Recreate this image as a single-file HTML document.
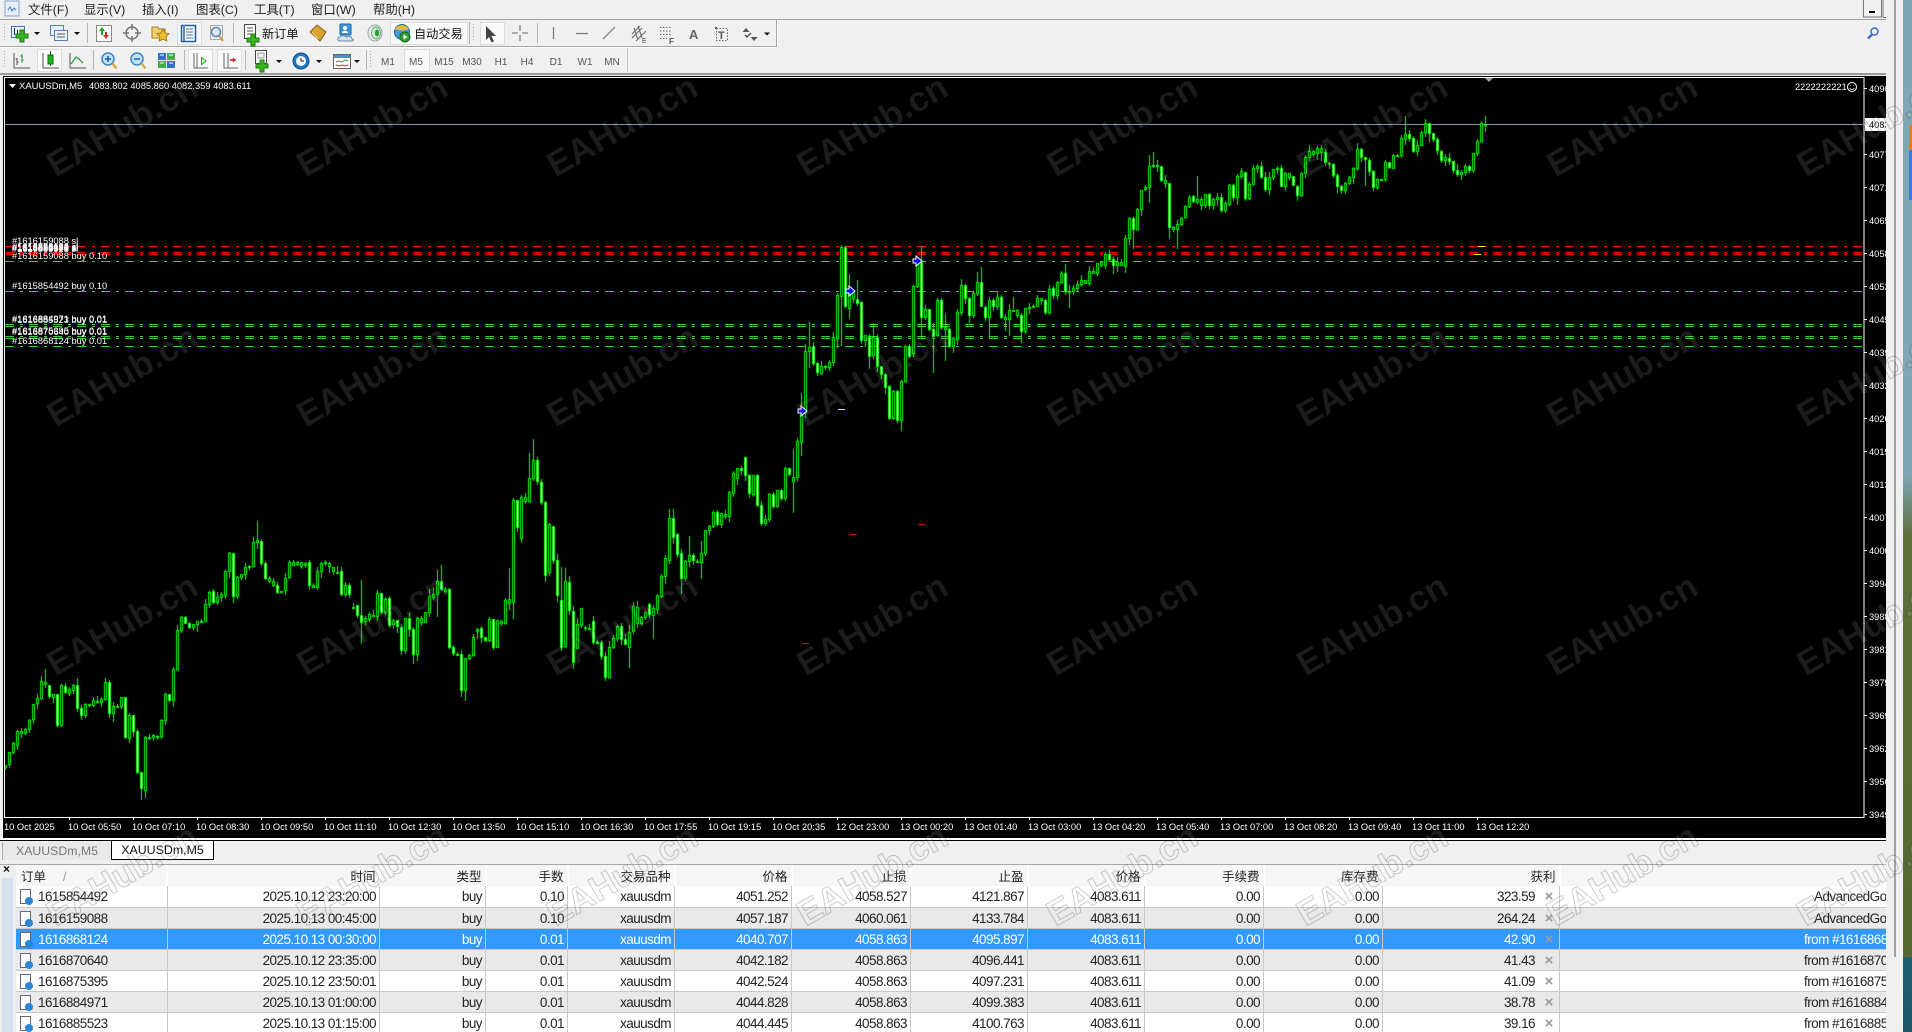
<!DOCTYPE html>
<html><head><meta charset="utf-8"><title>MT4</title>
<style>
html,body{margin:0;padding:0;width:1912px;height:1032px;overflow:hidden;background:#f0f0f0}
body{position:relative;font-family:"Liberation Sans","Noto Sans CJK SC",sans-serif;color:#222}
.abs{position:absolute}
svg{position:absolute;left:0;top:0;display:block}
#chart{position:absolute;left:3px;top:76px;width:1883px;height:762px;background:#000}
canvas{position:absolute;left:0;top:0}
#lines line{shape-rendering:crispEdges;stroke-dasharray:9 6 3 6}
.chtx{font:9.3px "Liberation Sans",sans-serif;fill:#fff}
table{position:absolute;border-collapse:collapse;table-layout:fixed;font:13.5px "Liberation Sans","Noto Sans CJK SC",sans-serif;letter-spacing:-.55px}
td{box-sizing:border-box;white-space:nowrap;overflow:hidden;text-align:right;padding:0 3px 0 0}
#tb td{height:21px;padding-top:1px;border-right:1px solid #c8c8c8;border-bottom:1px solid #c8c8c8;color:#222}
#tb td:first-child{text-align:left;padding-left:4px}
#tb td:last-child{text-align:left;border-right:0}
#tb td.p{padding-right:0}
#tb tr.g td{background:#e9e9e9}
#tb tr.w td{background:#fff}
#tb tr.s td{background:#3399ff;color:#fff}
.i{display:inline-block;position:relative;width:11px;height:15px;background:#fff;border:1px solid #667;margin-right:7px;vertical-align:-3px;box-sizing:border-box}
.i:after{content:"";position:absolute;right:-3px;bottom:-2px;width:8px;height:8px;border-radius:50%;background:#2a86d8}
.x{display:inline-block;width:24px;padding-left:4px;box-sizing:border-box;text-align:center;font-weight:bold;font-size:15px;color:#999;line-height:12px;letter-spacing:0}
#th{font-size:12.5px;letter-spacing:0}
#th td{height:21px;background:#f6f6f6;border-right:2px solid #fff;padding-right:3px;color:#222}
#th td:first-child{text-align:left;padding-left:5px}
</style></head>
<body>

<!-- toolbars -->
<svg width="1912" height="76" viewBox="0 0 1912 76" style="font-family:'Liberation Sans','Noto Sans CJK SC',sans-serif">
<rect x="5" y="1" width="14" height="15" fill="#e8eef8" stroke="#8aa4cc"/><path d="M8 10l2-3 2 4 2-3 2 2" stroke="#4a78c0" fill="none"/>
<g font-size="12.4" fill="#222">
<text x="28" y="14">文件(F)</text><text x="84" y="14">显示(V)</text><text x="142" y="14">插入(I)</text><text x="196" y="14">图表(C)</text><text x="254" y="14">工具(T)</text><text x="311" y="14">窗口(W)</text><text x="373" y="14">帮助(H)</text>
</g>
<rect x="1863.5" y="-1" width="18" height="18" fill="#f0f0f0" stroke="#777"/><rect x="1869" y="11" width="6" height="2" fill="#000"/><path d="M1883 0v17M1883 17.500h3" stroke="#777"/>
<rect x="0" y="19" width="1886" height="1" fill="#a3a3a3"/>
<rect x="0" y="46" width="776" height="1" fill="#a3a3a3"/><rect x="776" y="20" width="1" height="27" fill="#a3a3a3"/><rect x="0" y="47" width="777" height="1" fill="#fff"/><rect x="777" y="20" width="1" height="28" fill="#fff"/>
<rect x="627" y="48" width="1" height="24" fill="#c0c0c0"/>
<rect x="0" y="73" width="1886" height="2" fill="#9a9a9a"/>
<!-- pressed boxes -->
<g fill="#f9f9f9" stroke="#dcdcdc"><rect x="177.500" y="22.500" width="24" height="22"/><rect x="390.500" y="22.500" width="77" height="22"/><rect x="480.500" y="22.500" width="24" height="22"/><rect x="37.500" y="49.500" width="24" height="22"/><rect x="188.500" y="49.500" width="24" height="22"/><rect x="217.500" y="49.500" width="24" height="22"/><rect x="404.500" y="49.500" width="25" height="22"/></g>
<!-- separators -->
<path d="M87.500 23v20M233.500 23v20M469.500 22v22M537.500 23v20M93.500 50v20M184.500 50v20M245.500 50v20M366.500 50v20" stroke="#b4b4b4"/>
<path d="M4.500 24v18M473.500 24v18M4.500 51v18M370.500 51v18" stroke="#aaa" stroke-dasharray="1 2"/>
<!-- drop arrows -->
<g fill="#111"><path d="M34 32h6l-3 3zM74 32h6l-3 3zM764 32.500h6l-3 3zM276 60h6l-3 3zM316 60h6l-3 3zM354 60h6l-3 3z"/></g>
<!-- new chart -->
<rect x="11.500" y="26.500" width="13" height="11" fill="#e6f3ff" stroke="#3f74ad"/><path d="M14.500 28v7M17.500 30v6" stroke="#225"/>
<path d="M20 30h4v4h4v4h-4v4h-4v-4h-4v-4h4z" fill="#35b51e" stroke="#1e7a12"/>
<!-- profiles -->
<rect x="50.500" y="25.500" width="13" height="10" fill="#e6eef8" stroke="#5a7fb0"/><rect x="54.500" y="30.500" width="13" height="10" fill="#eef4fb" stroke="#5a7fb0"/><path d="M57 34h8M57 37h8" stroke="#556"/>
<!-- market watch -->
<rect x="96.500" y="25.500" width="15" height="16" fill="#fff" stroke="#8a8a8a"/><path d="M102 27l3 4h-2v4h-2v-4h-2z" fill="#1fa51f"/><path d="M106 39l-3-4h2v-3h2v3h2z" fill="#d03020"/>
<!-- crosshair -->
<circle cx="132" cy="33" r="6" fill="#eee" stroke="#777" stroke-width="1.500"/><path d="M132 24v6M132 36v6M123 33h6M135 33h6" stroke="#777" stroke-width="1.500"/>
<!-- star folder -->
<path d="M152 27h6l1 2h6v9h-13z" fill="#f0cf70" stroke="#a08030"/><path d="M163 29l2 4 4 .6-3 3 .8 4.400-3.800-2-3.800 2 .8-4.400-3-3 4-.6z" fill="#f3c230" stroke="#a87f10"/>
<!-- navigator -->
<rect x="181.500" y="25.500" width="14" height="16" fill="#fff" stroke="#1d5c9c" stroke-width="1.500"/><path d="M184 25v16" stroke="#4d8cc8" stroke-width="2"/><path d="M186 29h7M186 32h7M186 35h7M186 38h7" stroke="#3a6ea5"/>
<!-- search doc -->
<rect x="210.500" y="25.500" width="12" height="14" fill="#eee" stroke="#aaa"/><circle cx="216" cy="32" r="4.500" fill="#dfe9f3" stroke="#5a86b0" stroke-width="1.500"/><path d="M219 36l4 5" stroke="#c79a40" stroke-width="2"/>
<!-- new order -->
<rect x="244.500" y="24.500" width="11" height="14" fill="#fff" stroke="#444"/><path d="M247 28h6M247 31h6M247 34h4" stroke="#555"/>
<path d="M251 34h4v4h4v4h-4v4h-4v-4h-4v-4h4z" fill="#35b51e" stroke="#1e7a12"/>
<text x="262" y="38" font-size="12.2" fill="#111">新订单</text>
<!-- gold -->
<path d="M310 32l7-7 9 7-6 9z" fill="#d8a232" stroke="#8a6010"/><path d="M312 32l6 7" stroke="#f3d58a"/>
<!-- person cloud -->
<rect x="340" y="24" width="11" height="11" rx="1" fill="#3d93d8" stroke="#1e68a8"/><path d="M342 33c0-3 6-3 6 0" fill="#fff"/><circle cx="345" cy="28" r="2" fill="#fff"/><path d="M340 41c-3 0-3-4 0-4 1-2 5-2 6 0 2-1 6-1 6 2 2 0 2 2 0 2z" fill="#cfe0ee" stroke="#6c8aa6"/>
<!-- signal -->
<ellipse cx="375" cy="33" rx="7" ry="8" fill="#e8eef0" stroke="#9aa4aa"/><ellipse cx="376" cy="33" rx="4.500" ry="6" fill="#cfe8d0" stroke="#6aa86a"/><ellipse cx="377" cy="33" rx="2" ry="3.500" fill="#2a9a3a"/>
<!-- auto trading -->
<circle cx="402" cy="32" r="7.500" fill="#3b9bd8" stroke="#1f6c9c"/><path d="M395 29c3-5 11-5 14 0-4 2-10 2-14 0z" fill="#e9b93a"/><circle cx="405" cy="37" r="5" fill="#2ca02c" stroke="#166a16"/><path d="M403.500 34.500l4 2.500-4 2.500z" fill="#fff"/>
<text x="414" y="38" font-size="12.2" fill="#111">自动交易</text>
<!-- cursor -->
<path d="M486 26v14l3-3 2.500 5.500 2.500-1-2.500-5.500h4.500z" fill="#444"/>
<path d="M520 25v6M520 35v6M512 33h6M522 33h6" stroke="#666"/>
<path d="M553.500 27v12M576 33.500h12M603 39l12-12" stroke="#777" stroke-width="1.200"/>
<path d="M632 38l10-10M632 34l8-8M636 41l10-10M634 28l4 12M638 26l4 12" stroke="#666" fill="none"/><text x="642" y="43" font-size="7" fill="#444">E</text>
<path d="M660 27.500h12M660 31h12M660 34.500h12M660 38.500h7" stroke="#666" stroke-dasharray="1.500 1.500"/><text x="669" y="44" font-size="8" font-weight="bold" fill="#555">F</text>
<text x="689" y="39" font-size="13" font-weight="bold" fill="#666">A</text>
<rect x="716.500" y="28.500" width="11" height="12" fill="none" stroke="#666" stroke-dasharray="1.500 1.500"/><rect x="715" y="27" width="2" height="2" fill="#666"/><text x="718" y="39" font-size="11" font-weight="bold" fill="#555">T</text>
<path d="M746 28l3.500 4h-7zM754 41l-3.500-4h7z" fill="#555"/><path d="M745 35l2 2 4-4" stroke="#555" fill="none" stroke-width="1.500"/>
<!-- search -->
<circle cx="1874.500" cy="31.500" r="3.500" fill="#e8f0fa" stroke="#3a6fc8" stroke-width="1.500"/><path d="M1872 34.500l-4 4" stroke="#3a6fc8" stroke-width="2.500"/>
<!-- row 2 -->
<path d="M14 53v15h16M17 58v7M15.500 59h2M17 62h1.500M22 54v9M20.500 56h2M22 60h1.500" stroke="#555" fill="none"/><path d="M22 54v9" stroke="#1a9a1a"/>
<path d="M43 53v15h16" stroke="#555" fill="none"/><rect x="48" y="55" width="5" height="9" fill="#22b422" stroke="#0c6a0c"/><path d="M50.500 51v4M50.500 64v2" stroke="#0c6a0c"/>
<path d="M70 53v15h16" stroke="#555" fill="none"/><path d="M71 64l5-7 4 3 3 3" stroke="#2a9a3a" fill="none" stroke-width="1.200"/>
<circle cx="108" cy="59" r="6" fill="#bfe0f6" stroke="#3a86c8" stroke-width="1.500"/><path d="M105 59h6M108 56v6" stroke="#1c60a0" stroke-width="1.500"/><path d="M112.500 63.500l4 5" stroke="#d8b040" stroke-width="2.500"/>
<circle cx="137" cy="59" r="6" fill="#bfe0f6" stroke="#3a86c8" stroke-width="1.500"/><path d="M134 59h6" stroke="#1c60a0" stroke-width="1.500"/><path d="M141.500 63.500l4 5" stroke="#d8b040" stroke-width="2.500"/>
<rect x="158" y="53" width="8" height="7" fill="#2f72c4"/><rect x="167" y="53" width="8" height="7" fill="#3bb04a"/><rect x="158" y="61" width="8" height="7" fill="#3bb04a"/><rect x="167" y="61" width="8" height="7" fill="#2f72c4"/><path d="M160 55h4M169 55h4M160 63h4M169 63h4" stroke="#fff"/>
<path d="M194 53v15h14M197 53v15" stroke="#666" fill="none"/><path d="M201.500 57.500l4.500 3.500-4.500 3.500z" fill="#e8f8e8" stroke="#1c9a1c"/>
<path d="M224 53v15h14M228 53v15" stroke="#666" fill="none"/><path d="M236 60l-3-2v1.500h-3v1h3v1.500z" fill="#d02020" stroke="#d02020" stroke-width=".5"/>
<rect x="255.500" y="50.500" width="11" height="13" fill="#fff" stroke="#444"/><path d="M258 53h6v5h-6z" fill="#eee" stroke="#999"/>
<path d="M260 60h4v4h4v4h-4v4h-4v-4h-4v-4h4z" fill="#35b51e" stroke="#1e7a12"/>
<circle cx="301" cy="61" r="8" fill="#1e78c8" stroke="#11508c"/><circle cx="301" cy="61" r="5" fill="#f4f8fb"/><path d="M301 58v3h3" stroke="#222" fill="none"/>
<rect x="333.500" y="54.500" width="17" height="14" fill="#fff" stroke="#666"/><rect x="334" y="55" width="16" height="3" fill="#4a90d0"/><path d="M336 62l3-1 3 1 3-2 3 1" stroke="#2a9a2a" fill="none"/><path d="M336 65l3 1 3-1 3 1 3-1" stroke="#c03020" fill="none"/>
<g font-size="10" fill="#555" text-anchor="middle"><text x="388" y="65">M1</text><text x="416" y="65">M5</text><text x="444" y="65">M15</text><text x="472" y="65">M30</text><text x="501" y="65">H1</text><text x="527" y="65">H4</text><text x="556" y="65">D1</text><text x="585" y="65">W1</text><text x="612" y="65">MN</text></g>
</svg>

<!-- chart -->
<div id="chart"></div>
<svg id="lines" width="1912" height="838" style="pointer-events:none">
<rect x="4" y="77" width="1859.500" height="740" fill="none" stroke="#fff" stroke-width="1" shape-rendering="crispEdges" transform="translate(.5 .5)"/>
<line x1="5" x2="1863" y1="124.500" y2="124.500" style="stroke:#8496a8;stroke-dasharray:none"/>
<g stroke="#ff0000"><line x1="5" x2="1863" y1="246.500" y2="246.500"/><line x1="5" x2="1863" y1="252.500" y2="252.500"/><line x1="5" x2="1863" y1="254.500" y2="254.500"/></g>
<g stroke="#32cd32"><line x1="5" x2="1863" y1="261.500" y2="261.500"/><line x1="5" x2="1863" y1="291.500" y2="291.500"/><line x1="5" x2="1863" y1="324.500" y2="324.500"/><line x1="5" x2="1863" y1="326.500" y2="326.500"/><line x1="5" x2="1863" y1="336.500" y2="336.500"/><line x1="5" x2="1863" y1="338.500" y2="338.500"/><line x1="5" x2="1863" y1="346.500" y2="346.500"/></g>
</svg>
<canvas id="cv" width="1863" height="817"></canvas>
<svg width="1912" height="838" style="pointer-events:none">
<path d="M9 84h7l-3.500 4z" fill="#fff"/>
<text class="chtx" x="19" y="89" style="font-size:9.5px">XAUUSDm,M5</text><text class="chtx" x="89" y="89">4083.802 4085.860 4082.359 4083.611</text>
<text class="chtx" x="1795" y="90">2222222221</text>
<circle cx="1852" cy="87" r="4.500" fill="none" stroke="#fff"/><path d="M1850 85.500h.8M1853.500 85.500h.8M1849.800 88c1 2 3.500 2 4.500 0" stroke="#fff" fill="none" stroke-width=".8"/>
<path d="M1485 78h8l-4 4z" fill="#9aa4ac"/>
<text class="chtx" x="12" y="244">#1616159088 sl</text>
<text class="chtx" x="12" y="250">#1615854492 sl</text><text class="chtx" x="12" y="250">#1616868124 sl</text><text class="chtx" x="12" y="251">#1616870640 sl</text><text class="chtx" x="12" y="251">#1616875395 sl</text><text class="chtx" x="12" y="251">#1616884971 sl</text><text class="chtx" x="12" y="252">#1616885523 sl</text>
<text class="chtx" x="12" y="259">#1616159088 buy 0.10</text>
<text class="chtx" x="12" y="289">#1615854492 buy 0.10</text>
<text class="chtx" x="12" y="322">#1616884971 buy 0.01</text><text class="chtx" x="12" y="323">#1616885523 buy 0.01</text>
<text class="chtx" x="12" y="334">#1616875395 buy 0.01</text><text class="chtx" x="12" y="335">#1616870640 buy 0.01</text>
<text class="chtx" x="12" y="344">#1616868124 buy 0.01</text>
<!-- arrows -->
<g fill="#0000ee" stroke="#fff" stroke-width="1"><path d="M913 259h3v-3l6 5-6 5v-3h-3z"/><path d="M846 289h3v-3l6 5-6 5v-3h-3z"/><path d="M798 409h3v-3l6 5-6 5v-3h-3z"/></g>
<g shape-rendering="crispEdges"><rect x="838" y="409" width="7" height="1" fill="#ffff00"/><rect x="1478" y="246" width="7" height="1" fill="#ffff00"/><rect x="1474" y="254" width="7" height="1" fill="#ffff00"/><rect x="802" y="643" width="7" height="1" fill="#e01010"/><rect x="918" y="524" width="7" height="1" fill="#c01010"/><rect x="850" y="534" width="7" height="1" fill="#c01010"/></g>
<!-- axis ticks + labels -->
<g stroke="#fff" shape-rendering="crispEdges"><path d="M1864 88.500h3M1864 154.500h3M1864 187.500h3M1864 220.500h3M1864 253.500h3M1864 286.500h3M1864 319.500h3M1864 352.500h3M1864 385.500h3M1864 418.500h3M1864 451.500h3M1864 484.500h3M1864 517.500h3M1864 550.500h3M1864 583.500h3M1864 616.500h3M1864 649.500h3M1864 682.500h3M1864 715.500h3M1864 748.500h3M1864 781.500h3M1864 814.500h3"/>
<path d="M69.500 817v3M133.500 817v3M197.500 817v3M261.500 817v3M325.500 817v3M389.500 817v3M453.500 817v3M517.500 817v3M581.500 817v3M645.500 817v3M709.500 817v3M773.500 817v3M837.500 817v3M901.500 817v3M965.500 817v3M1029.500 817v3M1093.500 817v3M1157.500 817v3M1221.500 817v3M1285.500 817v3M1349.500 817v3M1413.500 817v3M1477.500 817v3"/></g>
<rect x="1865" y="118" width="21" height="13" fill="#fff"/>
<g font-family="Liberation Sans,sans-serif" font-size="9.3" fill="#fff">
<text x="1869" y="92">4090</text><text x="1869" y="128" fill="#000">4083</text><text x="1869" y="158">4077</text><text x="1869" y="191">4071</text><text x="1869" y="224">4065</text><text x="1869" y="257">4058</text><text x="1869" y="290">4052</text><text x="1869" y="323">4045</text><text x="1869" y="356">4039</text><text x="1869" y="389">4032</text><text x="1869" y="422">4026</text><text x="1869" y="455">4019</text><text x="1869" y="488">4013</text><text x="1869" y="521">4007</text><text x="1869" y="554">4000</text><text x="1869" y="587">3994</text><text x="1869" y="620">3988</text><text x="1869" y="653">3981</text><text x="1869" y="686">3975</text><text x="1869" y="719">3969</text><text x="1869" y="752">3962</text><text x="1869" y="785">3956</text><text x="1869" y="818">3949</text>
</g>
<text class="chtx" x="4" y="830">10 Oct 2025</text><text class="chtx" x="68" y="830">10 Oct 05:50</text><text class="chtx" x="132" y="830">10 Oct 07:10</text><text class="chtx" x="196" y="830">10 Oct 08:30</text><text class="chtx" x="260" y="830">10 Oct 09:50</text><text class="chtx" x="324" y="830">10 Oct 11:10</text><text class="chtx" x="388" y="830">10 Oct 12:30</text><text class="chtx" x="452" y="830">10 Oct 13:50</text><text class="chtx" x="516" y="830">10 Oct 15:10</text><text class="chtx" x="580" y="830">10 Oct 16:30</text><text class="chtx" x="644" y="830">10 Oct 17:55</text><text class="chtx" x="708" y="830">10 Oct 19:15</text><text class="chtx" x="772" y="830">10 Oct 20:35</text><text class="chtx" x="836" y="830">12 Oct 23:00</text><text class="chtx" x="900" y="830">13 Oct 00:20</text><text class="chtx" x="964" y="830">13 Oct 01:40</text><text class="chtx" x="1028" y="830">13 Oct 03:00</text><text class="chtx" x="1092" y="830">13 Oct 04:20</text><text class="chtx" x="1156" y="830">13 Oct 05:40</text><text class="chtx" x="1220" y="830">13 Oct 07:00</text><text class="chtx" x="1284" y="830">13 Oct 08:20</text><text class="chtx" x="1348" y="830">13 Oct 09:40</text><text class="chtx" x="1412" y="830">13 Oct 11:00</text><text class="chtx" x="1476" y="830">13 Oct 12:20</text>
</svg>

<!-- tabs -->
<div class="abs" style="left:0;top:838px;width:1886px;height:2px;background:#fff"></div>
<div class="abs" style="left:0;top:840px;width:1886px;height:1px;background:#000"></div>
<div class="abs" style="left:2px;top:842px;height:18px;background:#e9e9e9;border-left:1px solid #aaa;color:#777;font-size:12.3px;line-height:19px;padding-left:13px;width:94px">XAUUSDm,M5</div>
<div class="abs" style="left:111px;top:840px;width:101px;height:18px;background:#fff;border:1px solid #000;color:#111;font-size:12.4px;line-height:19px;text-align:center">XAUUSDm,M5</div>
<div class="abs" style="left:0;top:864px;width:1886px;height:1px;background:#a8a8a8"></div>
<!-- left strip -->
<div class="abs" style="left:3px;top:862px;font:bold 12px 'Liberation Sans',sans-serif;color:#111">×</div>
<div class="abs" style="left:2px;top:878px;width:11px;height:154px;background:#d6e2ef"></div>

<!-- table header -->
<table id="th" style="left:16px;top:865px;width:1870px">
<colgroup><col style="width:151px"><col style="width:212.500px"><col style="width:106px"><col style="width:82px"><col style="width:107px"><col style="width:117px"><col style="width:119px"><col style="width:117px"><col style="width:117px"><col style="width:119px"><col style="width:119px"><col style="width:177px"><col></colgroup>
<tr><td>订单<span style="margin-left:17px;color:#999">/</span></td><td>时间</td><td>类型</td><td>手数</td><td>交易品种</td><td>价格</td><td>止损</td><td>止盈</td><td>价格</td><td>手续费</td><td>库存费</td><td>获利</td><td></td></tr>
</table>
<!-- table body -->
<table id="tb" style="left:16px;top:886px;width:1870px">
<colgroup><col style="width:151px"><col style="width:212.500px"><col style="width:106px"><col style="width:82px"><col style="width:107px"><col style="width:117px"><col style="width:119px"><col style="width:117px"><col style="width:117px"><col style="width:119px"><col style="width:119px"><col style="width:177px"><col></colgroup>
<tr class="w"><td><span class="i"></span>1615854492</td><td>2025.10.12 23:20:00</td><td>buy</td><td>0.10</td><td>xauusdm</td><td>4051.252</td><td>4058.527</td><td>4121.867</td><td>4083.611</td><td>0.00</td><td>0.00</td><td class="p">323.59<span class="x">×</span></td><td style="padding-left:254px">AdvancedGo</td></tr>
<tr class="g"><td><span class="i"></span>1616159088</td><td>2025.10.13 00:45:00</td><td>buy</td><td>0.10</td><td>xauusdm</td><td>4057.187</td><td>4060.061</td><td>4133.784</td><td>4083.611</td><td>0.00</td><td>0.00</td><td class="p">264.24<span class="x">×</span></td><td style="padding-left:254px">AdvancedGo</td></tr>
<tr class="s"><td><span class="i"></span>1616868124</td><td>2025.10.13 00:30:00</td><td>buy</td><td>0.01</td><td>xauusdm</td><td>4040.707</td><td>4058.863</td><td>4095.897</td><td>4083.611</td><td>0.00</td><td>0.00</td><td class="p">42.90<span class="x">×</span></td><td style="padding-left:244px">from #1616868</td></tr>
<tr class="g"><td><span class="i"></span>1616870640</td><td>2025.10.12 23:35:00</td><td>buy</td><td>0.01</td><td>xauusdm</td><td>4042.182</td><td>4058.863</td><td>4096.441</td><td>4083.611</td><td>0.00</td><td>0.00</td><td class="p">41.43<span class="x">×</span></td><td style="padding-left:244px">from #1616870</td></tr>
<tr class="w"><td><span class="i"></span>1616875395</td><td>2025.10.12 23:50:01</td><td>buy</td><td>0.01</td><td>xauusdm</td><td>4042.524</td><td>4058.863</td><td>4097.231</td><td>4083.611</td><td>0.00</td><td>0.00</td><td class="p">41.09<span class="x">×</span></td><td style="padding-left:244px">from #1616875</td></tr>
<tr class="g"><td><span class="i"></span>1616884971</td><td>2025.10.13 01:00:00</td><td>buy</td><td>0.01</td><td>xauusdm</td><td>4044.828</td><td>4058.863</td><td>4099.383</td><td>4083.611</td><td>0.00</td><td>0.00</td><td class="p">38.78<span class="x">×</span></td><td style="padding-left:244px">from #1616884</td></tr>
<tr class="w"><td><span class="i"></span>1616885523</td><td>2025.10.13 01:15:00</td><td>buy</td><td>0.01</td><td>xauusdm</td><td>4044.445</td><td>4058.863</td><td>4100.763</td><td>4083.611</td><td>0.00</td><td>0.00</td><td class="p">39.16<span class="x">×</span></td><td style="padding-left:244px">from #1616885</td></tr>
</table>

<!-- right strip -->
<div class="abs" style="left:1886px;top:0;width:17px;height:1032px;background:#f0f0f0"></div>
<div class="abs" style="left:1894px;top:0;width:2px;height:957px;background:#a3a3a3"></div>
<div class="abs" style="left:1903px;top:0;width:9px;height:1032px;background:linear-gradient(#7fa6b4 0,#7fa6b4 46%,#5d6f3a 52%,#566832 92.700%,#1f5f70 92.800%,#1c5668 100%)"></div>
<div class="abs" style="left:1909px;top:125px;width:3px;height:25px;background:#f07a10;border-radius:3px 0 0 3px"></div>
<div class="abs" style="left:1909px;top:150px;width:3px;height:50px;background:#3b78e0"></div>

<!-- watermark -->
<svg width="1912" height="1032" style="pointer-events:none">
<g transform="translate(4 0)" font-family="Liberation Sans,sans-serif" font-weight="bold" font-size="35" text-anchor="middle" fill="rgba(255,255,255,.11)" stroke="rgba(0,0,0,.2)" stroke-width="1">
<text transform="translate(124 136) rotate(-30)">EAHub.cn</text><text transform="translate(374 136) rotate(-30)">EAHub.cn</text><text transform="translate(624 136) rotate(-30)">EAHub.cn</text><text transform="translate(874 136) rotate(-30)">EAHub.cn</text><text transform="translate(1124 136) rotate(-30)">EAHub.cn</text><text transform="translate(1374 136) rotate(-30)">EAHub.cn</text><text transform="translate(1624 136) rotate(-30)">EAHub.cn</text><text transform="translate(1874 136) rotate(-30)">EAHub.cn</text>
<text transform="translate(124 386) rotate(-30)">EAHub.cn</text><text transform="translate(374 386) rotate(-30)">EAHub.cn</text><text transform="translate(624 386) rotate(-30)">EAHub.cn</text><text transform="translate(874 386) rotate(-30)">EAHub.cn</text><text transform="translate(1124 386) rotate(-30)">EAHub.cn</text><text transform="translate(1374 386) rotate(-30)">EAHub.cn</text><text transform="translate(1624 386) rotate(-30)">EAHub.cn</text><text transform="translate(1874 386) rotate(-30)">EAHub.cn</text>
<text transform="translate(124 635) rotate(-30)">EAHub.cn</text><text transform="translate(374 635) rotate(-30)">EAHub.cn</text><text transform="translate(624 635) rotate(-30)">EAHub.cn</text><text transform="translate(874 635) rotate(-30)">EAHub.cn</text><text transform="translate(1124 635) rotate(-30)">EAHub.cn</text><text transform="translate(1374 635) rotate(-30)">EAHub.cn</text><text transform="translate(1624 635) rotate(-30)">EAHub.cn</text><text transform="translate(1874 635) rotate(-30)">EAHub.cn</text>
<text transform="translate(124 885) rotate(-30)">EAHub.cn</text><text transform="translate(374 885) rotate(-30)">EAHub.cn</text><text transform="translate(624 885) rotate(-30)">EAHub.cn</text><text transform="translate(874 885) rotate(-30)">EAHub.cn</text><text transform="translate(1124 885) rotate(-30)">EAHub.cn</text><text transform="translate(1374 885) rotate(-30)">EAHub.cn</text><text transform="translate(1624 885) rotate(-30)">EAHub.cn</text><text transform="translate(1874 885) rotate(-30)">EAHub.cn</text>
</g>
</svg>

<script>
(function(){
var zones=[
[0,420,"1035,1042 997,1033 970,997 932,974 932,938 928,938 901,928 853,898 835,850 784,835 787,793,748,800 796,829f 823,830 823,916f 796,916 797,817f 808,820 796,811 796,865f 865,885f 853,884 853,856 841,856 843 838,845 787,838 787,880f 859,880 859 832,859 832,952f 886,955 886,934f 934,1057f 1057,1105f,,1138 952,1111,,1130 952 946,952 949 901,949 823,901 823,841f 748,841 631,748 592,631 592,610f 610,622f 613,622 604,613 602 553,604 517,553 514,547f 532,547 523,532 454,526 400,454 400,529f 472,529 463,472 442,463 439 367,439,350 361,367,303,384 364,430f 430,475f 475,484 484,496 496,517f 514,517 475,511 427,472 427,436 427,433 427,439 430,436 427,496f 496,502 454,502 430,454 427 430,439 442,454 455 454,523f 496,523 496,523f 561 556,586f 586,607f,480,668 595,604 583,598 585 520,589 520,577f 538,577 535,616f 601,613 601,619f 622,691f 595,691 595,628f 628,703f,,728 595,703"],
[104,300,"955,965 937,965 889,937 883,890 844,883,810,948 844,868f,795 868,873 868,1040f 1040,1060f 1061 1062,1169f,,1187 1075,1169,,1200 1066,1075 1012,1066 988,994 985,1012f 1012,1021f 958,1021 958,1040f 961,1040 964,970 901,970 898,910,805 601,907,595,953 601,682f 592,715 592,604 535,604,458 481,535,418 481,544f 547,607f 607,826f 673,817 679,781f 781,886f 901,1042f,800,1050 844,1039,805 847,931f 934,1087f 973,1045 925,976 982 984 964,1027f 1025 1025,1069f 1069,1132f 1042,1132 1015,1042 979,1015 979,1018f 1018,1033f 997,1042,975,1100 919,994 922,970 952,970 937,952 913,943f 925,946,,1013 886,928 829,889 775,829 655,781,628 655,712f,628 703,763f 760,835f,,880 784,835 766,784,708 766,781f 784 760,787,723,835 691,760 679,691 637,679 637,673f 640,673 643,649 577,649 520,580 505,535 505,511f 472,526f 526,580f 526,583 526,616f 616,670f 658,670 583,658 583,619f 571,619 571,595f 505,595 505,523f 532,544,447,635 424,532 340,427,280,465 154,337,132,352 142,154,67,200 139,190f 190,217f"],
[204,230,"408,428 408 397,412 322,395 196,325,,350 52,199,45,345 52,229f 175,233,133,265 187,205 208,220f,150 217,331f 316,331 317,379f,,415 322,376,278 322,409f 409,433f 433,470f 469,565f 484,565 484,571f 454,571,,600 349,454 349,379f 169,370 100,169 97,262f,48,320 238,262 238,298f 298,319f,280,425 211,316 211,292f 292,298,250,390 298,349f 325,349 247,328 166,247 166,205f 205,254f 190,254 157,190,125 157,229f,110 232,262f 211,262,,320 211,229f 202,229"],
[249,100,"592,652f 652,658,,690 631,658,612,705 631,580 631,646 646,694f,640,725 625,694 622 619 595,619 595,601 601,637f 568,637 565,586f 547,586 520,547 520,574f,492 573,,,620 565,574 553,565 541,553 541,550 514,550 514,520 490,520 487,496 463,496 463,478f 478,496f 487,496 487,496 415,499 355,415 355,388f,,444 328,388 271,328 262,268 199,262,166,305 196,,156 196 199,241f 241,250 250,382f,250,414 382,388 373,388,,444 355,373 319,352 292,319 289,304f 298,307,228 298,316 283,316 283,316f 298,316 292,298 292,331f 310,331 256,313 256,292f 229,292 214,229 217,295f 253,295 205,253 199,205 199,232f 232,268f 232,268 208,232 205 205,259f 220,259 220,232 229,256f 259,286f 220,286 172,220 154,172 154,163 145,160 145,157 157,187f 190 193,226f 226,259f 259,271f 250,271 232,250 205,232 148,205 148,172f 172,178f,,255 181,214f 214,262f 238,262 238 187,238 187,202f 166,205 166 115,166 103,118,48 103,115f 115,154f 136,154 97,136 70,97,58 70,100f 100,118f 118,151f 154,181f 172,181 175,184f 184,211f 211,223f 217,223 199,217 199,211f 160,211 124,160 70,124 71,40,96"]
];
var c=document.getElementById('cv'),g=c.getContext('2d');
g.beginPath();g.rect(5,78,1858,739);g.clip();
var seed=7;function r(n){seed=(seed*16807)%2147483647;return seed%n;}
zones.forEach(function(z){
  var i=z[0],y0=z[1];
  z[2].split(' ').forEach(function(e){
    var a=e.split(','),t=parseInt(a[0]),fb=a[1],f=/f/.test(fb||''),b=fb?parseInt(fb):t;
    if(isNaN(b))b=t;
    var hi=a[2]?parseInt(a[2]):t-r(4)*r(7)-r(6);
    var lo=a[3]?parseInt(a[3]):b+r(4)*r(7)+r(6);
    var x=5+4*i,Y=function(v){return Math.round(y0+v/3);};
    var T=Y(t),B=Y(b),H=Y(hi),L=Y(lo);
    g.fillStyle='#00ff00';
    g.fillRect(x,H,1,L-H+1);
    if(B-T<2){g.fillRect(x-1,T,3,Math.max(2,B-T+1));}
    else{
      g.fillRect(x-1,T,3,B-T+1);
      g.fillStyle=f?'#ffffff':'#000000';
      g.fillRect(x,T+1,1,B-T-1);
    }
    i++;
  });
});
})();
</script>
</body></html>
